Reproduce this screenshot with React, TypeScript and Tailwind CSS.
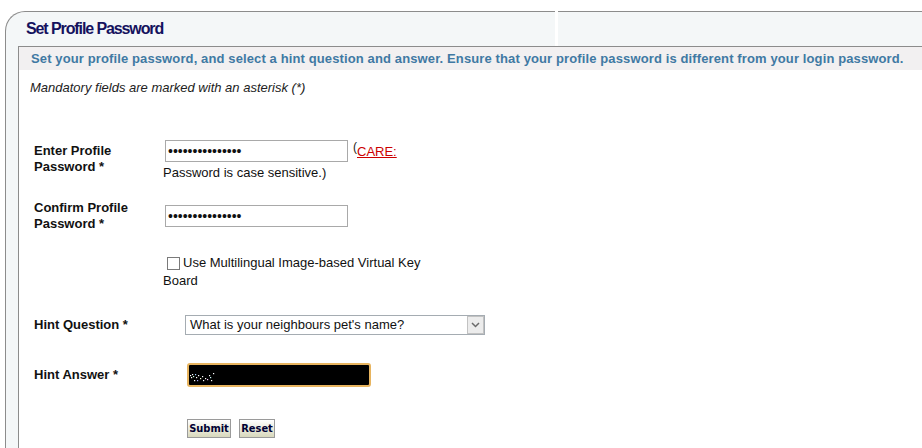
import React from "react";

function Noise() {
  const dots: [number, number, string][] = [
    [1, 9, "#fff"], [3, 8, "#fff"], [4, 10, "#cfd"], [2, 11, "#fff"], [6, 8, "#9cf"],
    [7, 11, "#fff"], [9, 9, "#fff"], [11, 12, "#ffd"], [13, 10, "#fff"], [16, 12, "#fff"],
    [18, 13, "#fcf"], [20, 9, "#fff"], [21, 11, "#cff"], [24, 7, "#fff"], [5, 14, "#fff"],
    [8, 14, "#aaf"], [14, 14, "#fff"], [22, 14, "#fff"],
  ];
  return (
    <svg width="28" height="18" viewBox="0 0 28 18" className="shrink-0">
      {dots.map(([x, y, c], i) => (
        <rect key={i} x={x} y={y} width="1.2" height="1.2" fill={c} />
      ))}
    </svg>
  );
}

export default function App() {
  return (
    <div className="w-[922px] h-[448px] overflow-hidden bg-white pt-[11px] pl-[5px] flex flex-col font-['Liberation_Sans',Arial,sans-serif] text-[#111]">
      {/* header */}
      <div className="flex h-[35px] shrink-0">
        <div className="w-[550px] border-t border-l border-[#8c8c8c] rounded-tl-[20px] bg-[#f4f7f8] pl-[20px] flex items-center">
          <h1 className="text-[16px] leading-[18px] font-bold text-[#15125e] tracking-[-1.1px]">
            Set Profile Password
          </h1>
        </div>
        <div className="ml-[3px] flex-1 border-t border-[#8c8c8c] bg-[#f4f7f8]" />
      </div>

      {/* body */}
      <div className="flex-1 border-l border-[#8c8c8c] bg-[#f4f7f8] pl-[12px] flex">
        <div className="flex-1 border-l border-t border-[#8c8c8c] bg-white flex flex-col">
          <div className="h-[23px] bg-[#f2f0f1] pl-[12px] flex items-center whitespace-nowrap">
            <p className="text-[13px] font-bold text-[#4079a3] tracking-[0.12px]">
              Set your profile password, and select a hint question and answer. Ensure that your profile password is different from your login password.
            </p>
          </div>
          <p className="pl-[11px] mt-[10px] text-[13px] leading-[16px] italic text-[#222]">
            Mandatory fields are marked with an asterisk (*)
          </p>

          <div className="pl-[15px] flex flex-col text-[13px] leading-[16px]">
            {/* row 1 */}
            <div className="mt-[44px] flex items-center">
              <div className="w-[129px] font-bold pb-[4px]">
                Enter Profile
                <br />
                Password *
              </div>
              <div className="flex flex-col">
                <div className="flex items-start">
                  <input
                    readOnly
                    value={"•••••••••••••••"}
                    className="ml-[2px] w-[183px] h-[22px] border border-[#a9a9a9] bg-white px-[2px] text-[14px] outline-none font-['Liberation_Sans',Arial,sans-serif]"
                  />
                  <span className="ml-[5px] text-[12px] leading-[14px] text-[#222]">(</span>
                  <a href="#" className="mt-[4px] text-[13px] leading-[16px] text-[#cc0000] underline">
                    CARE:
                  </a>
                </div>
                <span className="mt-[3px] text-[#111]">Password is case sensitive.)</span>
              </div>
            </div>

            {/* row 2 */}
            <div className="mt-[19px] flex items-center">
              <div className="w-[129px] font-bold">
                Confirm Profile
                <br />
                Password *
              </div>
              <input
                readOnly
                value={"•••••••••••••••"}
                className="ml-[2px] w-[183px] h-[22px] border border-[#a9a9a9] bg-white px-[2px] text-[14px] outline-none font-['Liberation_Sans',Arial,sans-serif]"
              />
            </div>

            {/* checkbox row */}
            <div className="mt-[23px] flex">
              <div className="w-[129px]" />
              <div className="flex flex-col">
                <div className="flex items-center">
                  <span className="ml-[4px] w-[13px] h-[13px] border border-[#7a7a7a] bg-white" />
                  <span className="ml-[3px] text-[#111]">Use Multilingual Image-based Virtual Key</span>
                </div>
                <span className="mt-[2px]">Board</span>
              </div>
            </div>

            {/* hint question */}
            <div className="mt-[26px] flex items-center">
              <div className="w-[151px] font-bold">Hint Question *</div>
              <div className="w-[300px] h-[20px] border border-[#a5acb2] bg-white flex items-center">
                <span className="flex-1 pl-[4px] text-[13px] leading-[16px]">What is your neighbours pet&apos;s name?</span>
                <span className="w-[17px] h-[18px] border border-[#c2c2c2] bg-[#ececec] flex items-center justify-center">
                  <svg width="9" height="6" viewBox="0 0 9 6">
                    <path d="M1 1 L4.5 4.5 L8 1" fill="none" stroke="#6a6a6a" strokeWidth="1.5" />
                  </svg>
                </span>
              </div>
            </div>

            {/* hint answer */}
            <div className="mt-[28px] flex items-center">
              <div className="w-[153px] font-bold">Hint Answer *</div>
              <div className="w-[184px] h-[24px] border-2 border-[#e7b45f] rounded-[3px] bg-black flex items-center">
                <Noise />
              </div>
            </div>

            {/* buttons */}
            <div className="mt-[32px] flex items-center">
              <div className="w-[153px]" />
              <button className="w-[44px] h-[19px] border border-[#9a9a9a] bg-gradient-to-b from-white to-[#d8d8bc] text-[11px] leading-[15px] font-bold text-[#000033] font-['DejaVu_Sans_Condensed','DejaVu_Sans',sans-serif] flex items-center justify-center">
                Submit
              </button>
              <button className="ml-[8px] w-[36px] h-[19px] border border-[#9a9a9a] bg-gradient-to-b from-white to-[#d8d8bc] text-[11px] leading-[15px] font-bold text-[#000033] font-['DejaVu_Sans_Condensed','DejaVu_Sans',sans-serif] flex items-center justify-center">
                Reset
              </button>
            </div>
          </div>
        </div>
      </div>
    </div>
  );
}
